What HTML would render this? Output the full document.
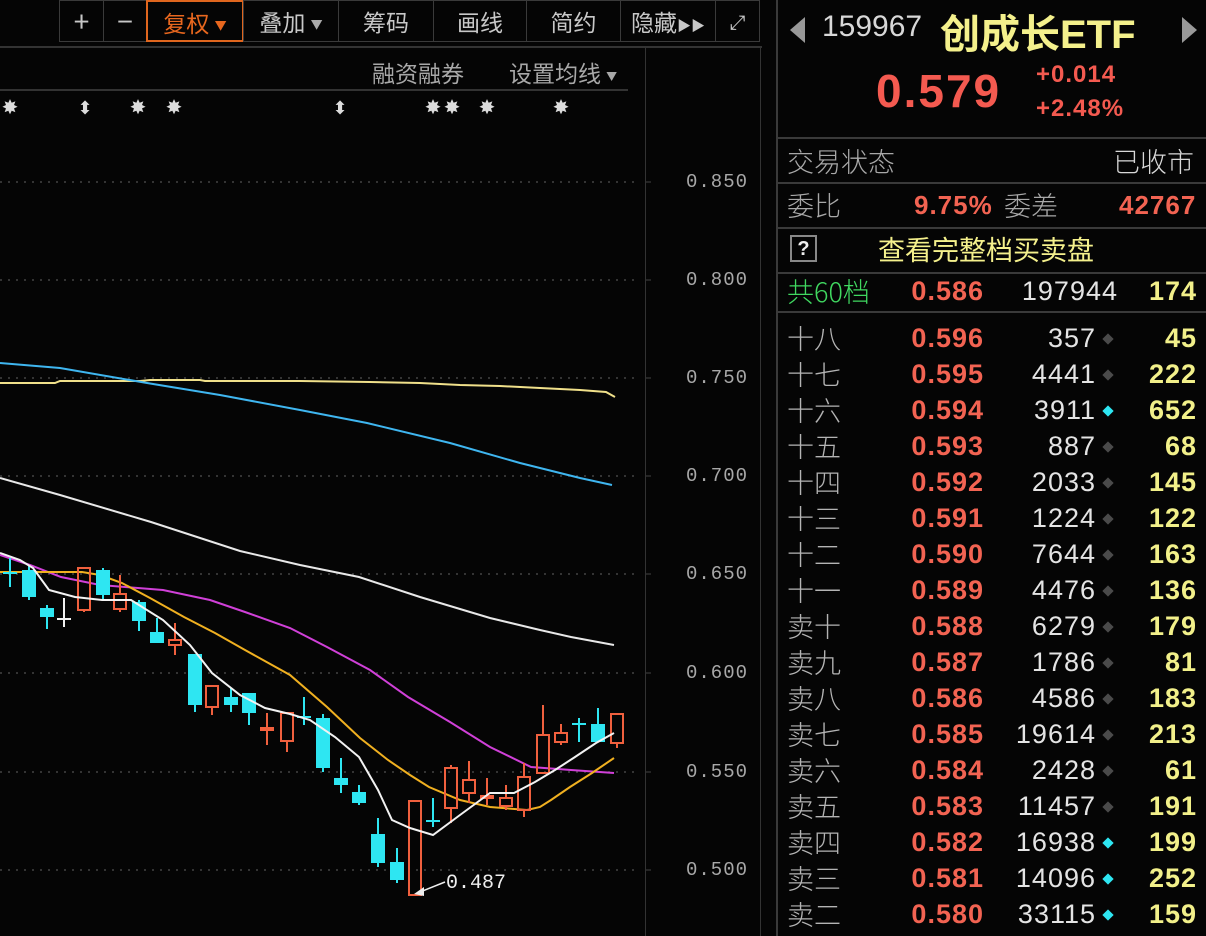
<!DOCTYPE html>
<html><head><meta charset="utf-8">
<style>
body{margin:0;width:1206px;height:936px;background:#050505;overflow:hidden;position:relative;font-family:"Liberation Sans","Noto Sans CJK SC",sans-serif;}
.a{position:absolute;white-space:nowrap;}
.btn{position:absolute;top:0;height:42px;border:1px solid #3a3a3a;box-sizing:border-box;color:#c8c8c8;font-size:23px;line-height:40px;text-align:center;font-family:"Noto Sans CJK SC",sans-serif;}
.row{position:absolute;left:778px;width:428px;height:36px;font-size:27px;line-height:36px;}
.row .l{position:absolute;left:9px;color:#b4b4b4;font-family:"Noto Sans CJK SC",sans-serif;font-weight:300;}
.row .p{position:absolute;right:222px;color:#f26352;font-weight:bold;letter-spacing:1px;}
.row .v{position:absolute;right:110px;color:#e4e4e4;letter-spacing:1px;}
.row .d{position:absolute;left:326px;top:15px;width:8px;height:8px;background:#4a4a4a;transform:rotate(45deg);}
.row .d.c{background:#2ee6f2;}
.row .n{position:absolute;right:9px;color:#f2f08a;font-weight:bold;letter-spacing:1px;}
.hl{position:absolute;left:778px;width:428px;height:2px;background:#3a3a3a;}
.ax{position:absolute;left:686px;color:#a8a8a8;font-family:"Liberation Mono",monospace;font-size:19px;letter-spacing:1px;}
</style></head><body>
<!-- toolbar -->
<div class="btn" style="left:59px;width:45px;font-size:28px;">+</div>
<div class="btn" style="left:103px;width:44px;font-size:28px;">−</div>
<div class="btn" style="left:146px;width:98px;border:2px solid #e0661e;color:#e8671e;">复权 <span style="font-size:12px;vertical-align:middle">▼</span></div>
<div class="btn" style="left:243px;width:96px;">叠加 <span style="font-size:12px;vertical-align:middle;color:#aaa">▼</span></div>
<div class="btn" style="left:338px;width:96px;">筹码</div>
<div class="btn" style="left:433px;width:94px;">画线</div>
<div class="btn" style="left:526px;width:95px;">简约</div>
<div class="btn" style="left:620px;width:96px;">隐藏<span style="font-size:14px">▶▶</span></div>
<div class="btn" style="left:715px;width:45px;font-size:20px;">⤢</div>
<div class="a" style="left:0;top:46px;width:762px;height:2px;background:#333"></div>
<div class="a" style="left:0;top:89px;width:628px;height:2px;background:#333"></div>
<div class="a" style="left:645px;top:47px;width:1px;height:889px;background:#333"></div>
<div class="a" style="left:760px;top:47px;width:1px;height:889px;background:#333"></div>
<div class="a" style="left:776px;top:0;width:2px;height:936px;background:#3a3a3a"></div>
<div class="a" style="left:372px;top:55px;color:#a8a8a8;font-size:23px;font-family:'Noto Sans CJK SC',sans-serif;">融资融券</div>
<div class="a" style="left:509px;top:55px;color:#a8a8a8;font-size:23px;font-family:'Noto Sans CJK SC',sans-serif;">设置均线 <span style="font-size:11px;vertical-align:middle">▼</span></div>
<div class="ax" style="top:171px">0.850</div>
<div class="ax" style="top:269px">0.800</div>
<div class="ax" style="top:367px">0.750</div>
<div class="ax" style="top:465px">0.700</div>
<div class="ax" style="top:563px">0.650</div>
<div class="ax" style="top:662px">0.600</div>
<div class="ax" style="top:761px">0.550</div>
<div class="ax" style="top:859px">0.500</div>
<svg class="a" style="left:0;top:0" width="776" height="936">
<g stroke="#444" stroke-width="1.5" stroke-dasharray="2 6">
<line x1="0" y1="182" x2="640" y2="182"/><line x1="0" y1="280" x2="640" y2="280"/><line x1="0" y1="378" x2="640" y2="378"/><line x1="0" y1="476" x2="640" y2="476"/><line x1="0" y1="574" x2="640" y2="574"/><line x1="0" y1="673" x2="640" y2="673"/><line x1="0" y1="772" x2="640" y2="772"/><line x1="0" y1="870" x2="640" y2="870"/>
</g>
<g stroke="#444"><line x1="646" y1="182" x2="651" y2="182"/><line x1="646" y1="280" x2="651" y2="280"/><line x1="646" y1="378" x2="651" y2="378"/><line x1="646" y1="476" x2="651" y2="476"/><line x1="646" y1="574" x2="651" y2="574"/><line x1="646" y1="673" x2="651" y2="673"/><line x1="646" y1="772" x2="651" y2="772"/><line x1="646" y1="870" x2="651" y2="870"/></g>
<g fill="#ddd" font-size="20" font-family="Liberation Sans" text-anchor="middle">
<text x="10" y="114">✸</text><text x="138" y="114">✸</text><text x="174" y="114">✸</text><text x="433" y="114">✸</text><text x="452" y="114">✸</text><text x="487" y="114">✸</text><text x="561" y="114">✸</text>
<text x="85" y="114" font-size="18">⬍</text><text x="340" y="114" font-size="18">⬍</text>
</g>
<g fill="none" stroke-width="2">
<polyline stroke="#f0e08a" points="0,383 55,383 60,381 140,381 150,380 200,380 205,381 300,381 370,382 420,383 460,385 500,386 540,388 580,390 606,392 615,397"/>
<polyline stroke="#3fb6f0" points="0,363 60,368 147,383 220,395 300,410 367,423 450,443 520,463 580,478 612,485"/>
<polyline stroke="#e8e8e8" points="0,478 60,495 151,522 240,551 300,565 359,577 420,597 490,618 540,630 571,637 614,645"/>
<polyline stroke="#d040d8" points="0,555 30,565 61,577 100,585 163,590 210,600 245,612 290,628 327,647 370,670 408,697 450,722 490,747 531,767 571,770 614,773"/>
<polyline stroke="#f0b020" points="0,572 82,572 100,575 122,583 150,598 184,617 215,633 245,650 290,675 327,707 360,738 388,760 410,775 429,787 460,800 490,807 527,810 540,807 551,800 570,787 592,773 614,758"/>
</g>
<g id="c"></g>
<polyline fill="none" stroke="#f2f2f2" stroke-width="2" points="0,553 20,560 33,568 49,590 75,597 102,600 131,600 163,620 190,645 212,673 240,695 265,708 290,714 310,720 335,737 359,757 378,790 392,820 410,828 433,835 460,815 490,793 514,793 535,782 555,770 575,757 596,743 614,733"/>
<path d="M420 892 L445 882" stroke="#eee" stroke-width="1.5"/><path d="M414 894 L424 887 L424 896Z" fill="#eee"/>
<text x="446" y="888" fill="#eee" font-size="20" font-family="Liberation Mono">0.487</text>
</svg>
<!-- right panel -->
<div class="a" style="left:790px;top:17px;width:0;height:0;border-top:13px solid transparent;border-bottom:13px solid transparent;border-right:15px solid #999;"></div>
<div class="a" style="left:1182px;top:17px;width:0;height:0;border-top:13px solid transparent;border-bottom:13px solid transparent;border-left:15px solid #999;"></div>
<div class="a" style="left:822px;top:10px;color:#d8d8d8;font-size:30px;">159967</div>
<div class="a" style="left:940px;top:2px;color:#f4f08c;font-size:40px;font-weight:bold;">创成长ETF</div>
<div class="a" style="left:876px;top:64px;color:#f45a50;font-size:46px;font-weight:bold;letter-spacing:2px;">0.579</div>
<div class="a" style="left:1036px;top:61px;color:#f45a50;font-size:24px;font-weight:bold;letter-spacing:1px;">+0.014</div>
<div class="a" style="left:1036px;top:95px;color:#f45a50;font-size:24px;font-weight:bold;letter-spacing:1px;">+2.48%</div>
<div class="hl" style="top:137px"></div>
<div class="a" style="left:787px;top:142px;color:#a8a8a8;font-size:27px;font-family:'Noto Sans CJK SC',sans-serif;font-weight:300;line-height:38px;">交易状态</div>
<div class="a" style="left:1113px;top:142px;color:#d8d8d8;font-size:27px;font-family:'Noto Sans CJK SC',sans-serif;font-weight:300;line-height:38px;">已收市</div>
<div class="hl" style="top:182px"></div>
<div class="a" style="left:787px;top:186px;color:#a8a8a8;font-size:27px;font-family:'Noto Sans CJK SC',sans-serif;font-weight:300;line-height:38px;">委比</div>
<div class="a" style="left:914px;top:186px;color:#f26352;font-size:26px;font-weight:bold;line-height:38px;letter-spacing:1px;">9.75%</div>
<div class="a" style="left:1004px;top:186px;color:#a8a8a8;font-size:27px;font-family:'Noto Sans CJK SC',sans-serif;font-weight:300;line-height:38px;">委差</div>
<div class="a" style="left:1119px;top:186px;color:#f26352;font-size:26px;font-weight:bold;line-height:38px;letter-spacing:1px;">42767</div>
<div class="hl" style="top:227px"></div>
<div class="a" style="left:790px;top:235px;width:27px;height:27px;border:2px solid #888;box-sizing:border-box;color:#eee;font-size:20px;font-weight:bold;text-align:center;line-height:24px;">?</div>
<div class="a" style="left:878px;top:230px;color:#f4f08c;font-size:27px;font-family:'Noto Sans CJK SC',sans-serif;line-height:38px;">查看完整档买卖盘</div>
<div class="hl" style="top:272px"></div>
<div class="row" style="top:273px"><span class="l" style="color:#40d860">共60档</span><span class="p">0.586</span><span class="v" style="right:30px;display:none"></span><span class="a" style="right:88px;color:#e4e4e4;letter-spacing:1px">197944</span><span class="n">174</span></div>
<div class="hl" style="top:311px"></div>
<div class="row" style="top:320px"><span class="l">十八</span><span class="p">0.596</span><span class="v">357</span><span class="d"></span><span class="n">45</span></div>
<div class="row" style="top:356px"><span class="l">十七</span><span class="p">0.595</span><span class="v">4441</span><span class="d"></span><span class="n">222</span></div>
<div class="row" style="top:392px"><span class="l">十六</span><span class="p">0.594</span><span class="v">3911</span><span class="d c"></span><span class="n">652</span></div>
<div class="row" style="top:428px"><span class="l">十五</span><span class="p">0.593</span><span class="v">887</span><span class="d"></span><span class="n">68</span></div>
<div class="row" style="top:464px"><span class="l">十四</span><span class="p">0.592</span><span class="v">2033</span><span class="d"></span><span class="n">145</span></div>
<div class="row" style="top:500px"><span class="l">十三</span><span class="p">0.591</span><span class="v">1224</span><span class="d"></span><span class="n">122</span></div>
<div class="row" style="top:536px"><span class="l">十二</span><span class="p">0.590</span><span class="v">7644</span><span class="d"></span><span class="n">163</span></div>
<div class="row" style="top:572px"><span class="l">十一</span><span class="p">0.589</span><span class="v">4476</span><span class="d"></span><span class="n">136</span></div>
<div class="row" style="top:608px"><span class="l">卖十</span><span class="p">0.588</span><span class="v">6279</span><span class="d"></span><span class="n">179</span></div>
<div class="row" style="top:644px"><span class="l">卖九</span><span class="p">0.587</span><span class="v">1786</span><span class="d"></span><span class="n">81</span></div>
<div class="row" style="top:680px"><span class="l">卖八</span><span class="p">0.586</span><span class="v">4586</span><span class="d"></span><span class="n">183</span></div>
<div class="row" style="top:716px"><span class="l">卖七</span><span class="p">0.585</span><span class="v">19614</span><span class="d"></span><span class="n">213</span></div>
<div class="row" style="top:752px"><span class="l">卖六</span><span class="p">0.584</span><span class="v">2428</span><span class="d"></span><span class="n">61</span></div>
<div class="row" style="top:788px"><span class="l">卖五</span><span class="p">0.583</span><span class="v">11457</span><span class="d"></span><span class="n">191</span></div>
<div class="row" style="top:824px"><span class="l">卖四</span><span class="p">0.582</span><span class="v">16938</span><span class="d c"></span><span class="n">199</span></div>
<div class="row" style="top:860px"><span class="l">卖三</span><span class="p">0.581</span><span class="v">14096</span><span class="d c"></span><span class="n">252</span></div>
<div class="row" style="top:896px"><span class="l">卖二</span><span class="p">0.580</span><span class="v">33115</span><span class="d c"></span><span class="n">159</span></div>
<script>
var d=[[10,572,574,558,587,'c'],[29,570,597,565,600,'c'],[47,608,617,605,629,'c'],[64,618,620,598,627,'w'],[84,568,610,568,612,'r'],[103,570,595,568,600,'c'],[120,594,609,575,612,'r'],[139,602,621,600,631,'c'],[157,632,643,618,643,'c'],[175,640,645,623,655,'r'],[195,654,705,654,712,'c'],[212,686,707,686,715,'r'],[231,697,705,688,712,'c'],[249,693,713,693,725,'c'],[267,728,730,713,745,'r'],[287,713,741,713,752,'r'],[304,716,718,697,725,'c'],[323,718,768,714,772,'c'],[341,778,785,758,793,'c'],[359,792,803,785,805,'c'],[378,834,863,818,867,'c'],[397,862,880,848,883,'c'],[415,801,895,801,895,'r'],[433,820,822,798,827,'c'],[451,768,808,765,823,'r'],[469,780,793,761,803,'r'],[487,796,798,778,805,'r'],[506,798,806,785,810,'r'],[524,777,810,763,817,'r'],[543,735,773,705,773,'r'],[561,733,742,724,745,'r'],[579,723,725,718,742,'c'],[598,724,742,708,742,'c'],[617,714,743,714,748,'r']];
var s='';d.forEach(function(k){var col=k[5]=='c'?'#2ee6f2':k[5]=='w'?'#f0f0f0':'#f0603e';var x=k[0];
if(k[5]=='r'){s+='<line x1="'+x+'" y1="'+k[3]+'" x2="'+x+'" y2="'+k[1]+'" stroke="'+col+'" stroke-width="2"/><line x1="'+x+'" y1="'+k[2]+'" x2="'+x+'" y2="'+k[4]+'" stroke="'+col+'" stroke-width="2"/><rect x="'+(x-6)+'" y="'+k[1]+'" width="12" height="'+Math.max(2,k[2]-k[1])+'" fill="none" stroke="'+col+'" stroke-width="2"/>';}
else{s+='<line x1="'+x+'" y1="'+k[3]+'" x2="'+x+'" y2="'+k[4]+'" stroke="'+col+'" stroke-width="2"/><rect x="'+(x-7)+'" y="'+k[1]+'" width="14" height="'+Math.max(2,k[2]-k[1])+'" fill="'+col+'"/>';}});
document.getElementById('c').innerHTML=s;
</script>
</body></html>
